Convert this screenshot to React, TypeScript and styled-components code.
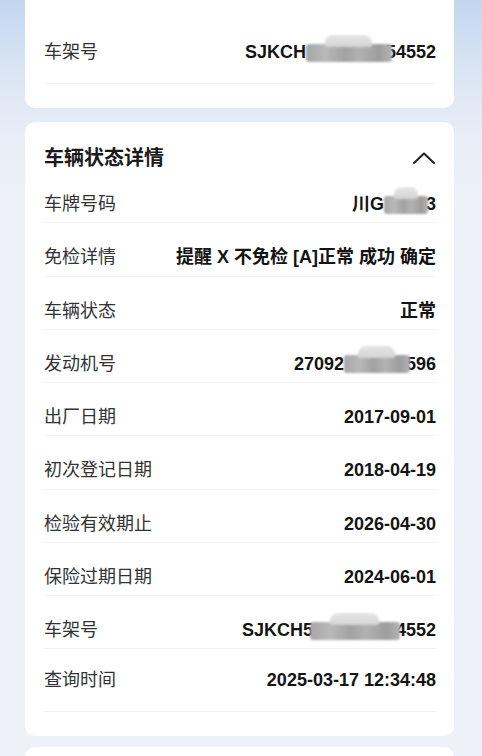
import React from "react";
import styled, { createGlobalStyle } from "styled-components";

const GlobalStyle = createGlobalStyle`
  html, body {
    margin: 0;
    padding: 0;
  }
  body {
    background: linear-gradient(180deg, #c2d6ef 0px, #dae5f3 70px, #e9eef7 140px, #eef2f8 220px);
    background-repeat: no-repeat;
    background-color: #eef2f8;
    font-family: "Liberation Sans", "Noto Sans CJK SC", sans-serif;
    -webkit-font-smoothing: antialiased;
  }
`;

const Page = styled.div`
  width: 429px;
  margin-left: 25px;
  display: flex;
  flex-direction: column;
  height: 756px;
  overflow: hidden;
`;

const Card = styled.section<{ $cut?: boolean; $after?: number }>`
  background: #fff;
  border-radius: ${(p) => (p.$cut ? "0 0 10px 10px" : "10px")};
  padding: ${(p) => (p.$cut ? "21px" : "24px")} 18px 24px 19px;
  margin-bottom: ${(p) => p.$after ?? 0}px;
  flex-shrink: 0;
`;

const Header = styled.div`
  display: flex;
  align-items: center;
  justify-content: space-between;
  height: 24px;
`;

const Title = styled.h2`
  margin: 0;
  font-size: 20px;
  font-weight: 700;
  color: #1b1b1b;
  line-height: 24px;
`;

const Row = styled.div<{ $last?: boolean }>`
  display: flex;
  align-items: center;
  justify-content: space-between;
  padding: ${(p) => (p.$last ? "21px 0 20px" : "24px 0 7.25px")};
  line-height: 21px;
  border-bottom: 1px solid #eff1f4;
`;

const Label = styled.span`
  font-size: 18px;
  color: #333;
  white-space: nowrap;
`;

const Value = styled.span`
  font-size: 18px;
  font-weight: 700;
  color: #141414;
  white-space: nowrap;
  display: inline-flex;
  align-items: center;
`;

const Mask = styled.span<{ $w: number; $ml?: number; $mr?: number }>`
  display: inline-block;
  position: relative;
  width: ${(p) => p.$w}px;
  height: 18px;
  margin-left: ${(p) => p.$ml ?? 0}px;
  margin-right: ${(p) => p.$mr ?? 0}px;
  background: linear-gradient(90deg, #a6a6a6 0%, #b9b9b9 22%, #a2a2a2 45%, #b2b2b2 62%, #9d9d9d 85%, #b4b4b4 100%);
  border-radius: 3px;
  filter: blur(0.8px);
  &::before {
    content: "";
    position: absolute;
    left: 22%;
    top: -9px;
    width: 55%;
    height: 12px;
    border-radius: 8px 8px 2px 2px;
    background: linear-gradient(180deg, #e6e6e6, #d4d4d4);
  }
`;

const Chevron = () => (
  <svg width="24" height="14" viewBox="0 0 24 14" fill="none">
    <polyline points="2,12 12,2.5 22,12" stroke="#1f1f1f" strokeWidth="2" strokeLinecap="round" strokeLinejoin="round" />
  </svg>
);

type Item = { label: string; value: React.ReactNode };

const details: Item[] = [
  {
    label: "车牌号码",
    value: (
      <>
        川G<Mask $w={44} $ml={0} $mr={-2} />3
      </>
    ),
  },
  { label: "免检详情", value: "提醒 X 不免检 [A]正常 成功 确定" },
  { label: "车辆状态", value: "正常" },
  {
    label: "发动机号",
    value: (
      <>
        27092<Mask $w={66} $mr={-4} />596
      </>
    ),
  },
  { label: "出厂日期", value: "2017-09-01" },
  { label: "初次登记日期", value: "2018-04-19" },
  { label: "检验有效期止", value: "2026-04-30" },
  { label: "保险过期日期", value: "2024-06-01" },
  {
    label: "车架号",
    value: (
      <>
        SJKCH5<Mask $w={90} $ml={-3} $mr={-4} />4552
      </>
    ),
  },
  { label: "查询时间", value: "2025-03-17 12:34:48" },
];

export default function App() {
  return (
    <>
      <GlobalStyle />
      <Page>
        <Card $cut $after={14}>
          <Row $last>
            <Label>车架号</Label>
            <Value>
              SJKCH<Mask $w={86} $mr={-6} />54552
            </Value>
          </Row>
        </Card>
        <Card $after={11}>
          <Header>
            <Title>车辆状态详情</Title>
            <Chevron />
          </Header>
          {details.map((d, i) => (
            <Row key={d.label} $last={i === details.length - 1}>
              <Label>{d.label}</Label>
              <Value>{d.value}</Value>
            </Row>
          ))}
        </Card>
        <Card>
          <Header />
        </Card>
      </Page>
    </>
  );
}
